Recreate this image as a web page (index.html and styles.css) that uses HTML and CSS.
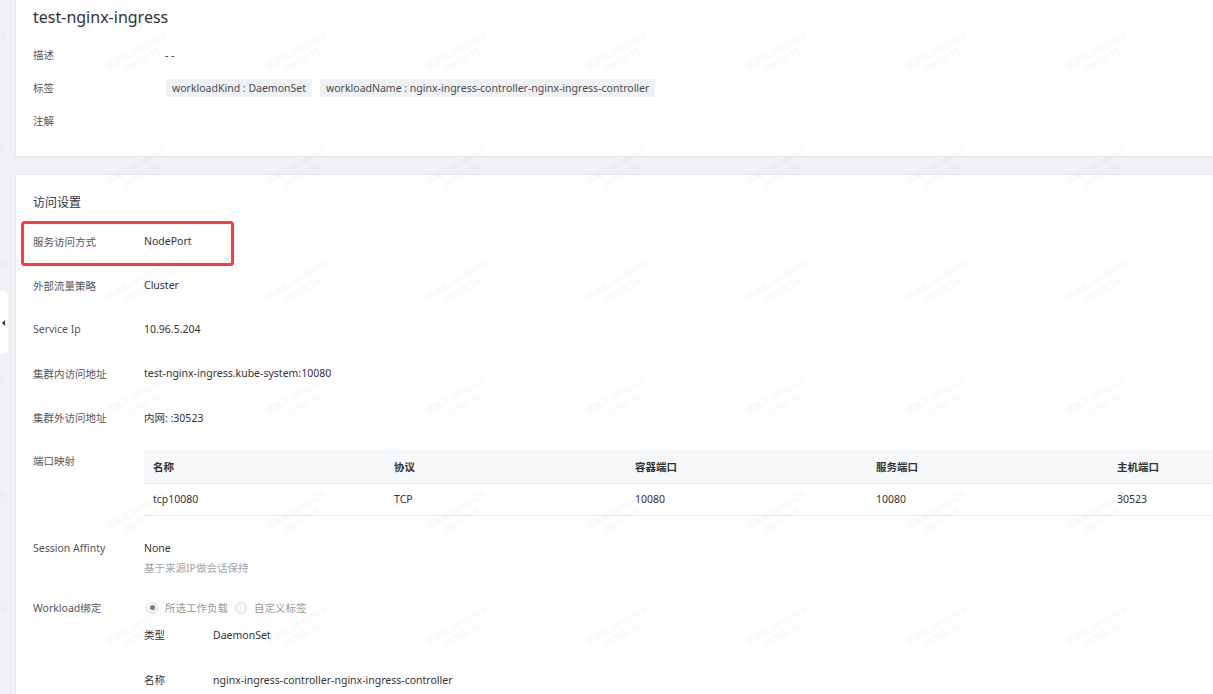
FILE: index.html
```html
<!DOCTYPE html>
<html lang="zh-CN">
<head>
<meta charset="utf-8">
<title>test-nginx-ingress</title>
<link rel="stylesheet" href="styles.css">
</head>
<body>
<div class="collapse-tab"><span class="collapse-arrow"></span></div>
<main class="page">
  <section class="card card-basic">
    <h1 class="title">test-nginx-ingress</h1>
    <div class="info-row"><div class="info-label">描述</div><div class="info-value">- -</div></div>
    <div class="info-row"><div class="info-label">标签</div>
      <div class="info-value tags">
        <span class="tag">workloadKind : DaemonSet</span>
        <span class="tag">workloadName : nginx-ingress-controller-nginx-ingress-controller</span>
      </div>
    </div>
    <div class="info-row"><div class="info-label">注解</div><div class="info-value"></div></div>
  </section>

  <section class="card card-access">
    <div class="section-title">访问设置</div>
    <div class="row"><div class="label">服务访问方式</div><div class="value">NodePort</div></div>
    <div class="row"><div class="label">外部流量策略</div><div class="value">Cluster</div></div>
    <div class="row"><div class="label">Service Ip</div><div class="value">10.96.5.204</div></div>
    <div class="row"><div class="label">集群内访问地址</div><div class="value">test-nginx-ingress.kube-system:10080</div></div>
    <div class="row"><div class="label">集群外访问地址</div><div class="value">内网: :30523</div></div>
    <div class="row row-table">
      <div class="label">端口映射</div>
      <div class="table-wrap">
        <table class="port-table">
          <thead>
            <tr><th>名称</th><th>协议</th><th>容器端口</th><th>服务端口</th><th>主机端口</th></tr>
          </thead>
          <tbody>
            <tr><td>tcp10080</td><td>TCP</td><td>10080</td><td>10080</td><td>30523</td></tr>
          </tbody>
        </table>
      </div>
    </div>
    <div class="row-block row-session">
      <div class="label-top">Session Affinty</div>
      <div class="value-stack">
        <div class="line">None</div>
        <div class="line hint">基于来源IP做会话保持</div>
      </div>
    </div>
    <div class="row-block row-workload">
      <div class="label-top">Workload绑定</div>
      <div class="value-stack">
        <div class="line radios">
          <span class="radio checked"></span><span class="radio-text">所选工作负载</span>
          <span class="radio"></span><span class="radio-text">自定义标签</span>
        </div>
        <div class="sub-row"><span class="sub-label">类型</span><span class="sub-value">DaemonSet</span></div>
        <div class="sub-row"><span class="sub-label">名称</span><span class="sub-value">nginx-ingress-controller-nginx-ingress-controller</span></div>
      </div>
    </div>
    <div class="highlight-box"></div>
  </section>
</main>

<svg class="watermark" width="1213" height="694" xmlns="http://www.w3.org/2000/svg" aria-hidden="true">
  <defs>
    <pattern id="wm" x="55" y="-3" width="160" height="115" patternUnits="userSpaceOnUse">
      <g transform="translate(82 56) rotate(-31)">
        <text x="0" y="0" text-anchor="middle" class="wm-text">研发云 jiangw23</text>
        <text x="0" y="12" text-anchor="middle" class="wm-text">20250116</text>
      </g>
    </pattern>
  </defs>
  <rect x="0" y="0" width="1213" height="694" fill="url(#wm)"/>
</svg>
</body>
</html>
```

FILE: styles.css
```css
* { box-sizing: border-box; }

html, body {
  margin: 0;
  padding: 0;
}

body {
  width: 1213px;
  height: 694px;
  overflow: hidden;
  background: #f0f1f5;
  font-family: "Noto Sans", "Noto Sans CJK SC", sans-serif;
  font-size: 10.5px;
  color: #333333;
  position: relative;
}

.page {
  padding-left: 15px;
  display: flex;
  flex-direction: column;
  gap: 17px;
}

.card {
  background: #ffffff;
  border: 1px solid #e6e7eb;
  border-right: none;
}

.card-basic {
  border-top: none;
  padding: 0 0 19px 17px;
  height: 157px;
}

.title {
  margin: 0;
  height: 34px;
  line-height: 34px;
  font-size: 16px;
  font-weight: 400;
  color: #333333;
  margin-bottom: 4px;
}

.info-row {
  display: flex;
  align-items: center;
  height: 33px;
}

.info-label {
  width: 132px;
  flex: none;
  color: #555555;
}

.info-value {
  color: #333333;
}

.tags {
  display: flex;
  gap: 8px;
  padding-left: 1px;
}

.tag {
  display: inline-flex;
  align-items: center;
  height: 18px;
  padding: 0 6px;
  background: #f0f1f5;
  color: #4a4a4a;
  border-radius: 2px;
  white-space: nowrap;
}

.card-access {
  position: relative;
  padding: 18px 0 0 17px;
  height: 540px;
  overflow: hidden;
}

.section-title {
  height: 20px;
  line-height: 20px;
  font-size: 12px;
  color: #333333;
  margin-bottom: 6px;
}

.row {
  display: flex;
  align-items: center;
  height: 44px;
}

.label {
  width: 111px;
  flex: none;
  color: #555555;
}

.value {
  color: #333333;
  white-space: nowrap;
}

.row-table {
  align-items: flex-start;
  height: auto;
  padding-bottom: 10px;
}

.row-table .label {
  line-height: 44px;
}

.table-wrap {
  margin-top: 11px;
  flex: none;
}

.port-table {
  border-collapse: collapse;
  table-layout: fixed;
  width: 1205px;
}

.port-table th,
.port-table td {
  width: 241px;
  text-align: left;
  padding: 0 9px;
  white-space: nowrap;
}

.port-table th {
  height: 33px;
  background: #f7f8fa;
  border-bottom: 1px solid #e4e5ea;
  font-weight: 600;
  color: #333333;
}

.port-table td {
  height: 32px;
  border-bottom: 1px solid #ebecef;
  color: #333333;
}

.row-block {
  display: flex;
  align-items: flex-start;
}

.row-session {
  padding-top: 12px;
}

.row-workload {
  padding-top: 20px;
}

.label-top {
  width: 111px;
  flex: none;
  line-height: 20px;
  color: #555555;
}

.value-stack {
  display: flex;
  flex-direction: column;
}

.line {
  line-height: 20px;
  height: 20px;
  white-space: nowrap;
}

.hint {
  color: #a3a3a3;
}

.radios {
  display: flex;
  align-items: center;
}

.radio {
  width: 12px;
  height: 12px;
  border-radius: 50%;
  border: 1px solid #d9d9d9;
  background: #f5f5f5;
  margin-left: 2px;
  margin-right: 7px;
  position: relative;
  flex: none;
}

.radio.checked::after {
  content: "";
  position: absolute;
  left: 2.5px;
  top: 2.5px;
  width: 5px;
  height: 5px;
  border-radius: 50%;
  background: #7a7a7a;
}

.radio-text {
  color: #9a9a9a;
  margin-right: 5px;
}

.sub-row {
  display: flex;
  height: 45px;
  padding-top: 7px;
  line-height: 20px;
  white-space: nowrap;
}

.sub-label {
  width: 69px;
  color: #333333;
}

.sub-value {
  color: #333333;
}

.highlight-box {
  position: absolute;
  left: 5px;
  top: 46px;
  width: 213px;
  height: 45px;
  border: 3px solid #ff3b3b;
  border-radius: 4px;
  pointer-events: none;
}

.collapse-tab {
  position: absolute;
  left: 0;
  top: 290px;
  width: 8px;
  height: 64px;
  background: #ffffff;
  border-radius: 0 6px 6px 0;
  z-index: 5;
}

.collapse-arrow {
  position: absolute;
  left: 2px;
  top: 30px;
  width: 0;
  height: 0;
  border-top: 3px solid transparent;
  border-bottom: 3px solid transparent;
  border-right: 3px solid #333333;
}

.watermark {
  position: absolute;
  left: 0;
  top: 0;
  pointer-events: none;
  z-index: 10;
}

.wm-text {
  font-family: "Noto Sans", "Noto Sans CJK SC", sans-serif;
  font-size: 9px;
  fill: rgba(0, 0, 0, 0.045);
}
```
